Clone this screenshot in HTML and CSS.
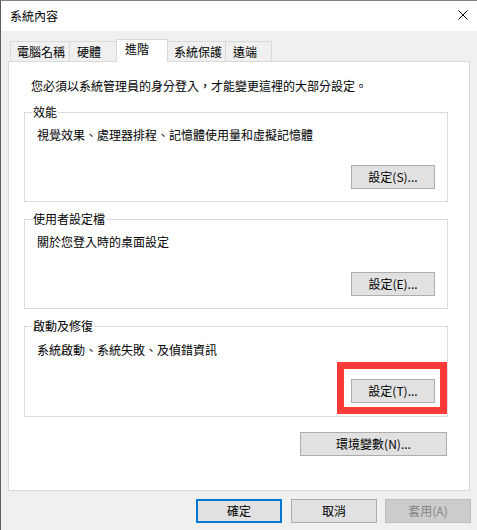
FILE: index.html
```html
<!DOCTYPE html>
<html lang="zh-Hant">
<head>
  <meta charset="UTF-8" />
  <title>系統內容</title>
  <link rel="stylesheet" href="styles.css">
</head>
<body>
  <div class="window">
    <div class="titlebar">
      <span class="title">系統內容</span>
      <svg class="close" width="10" height="10" viewBox="0 0 10 10">
        <path d="M0.5 0.5L9.5 9.5M9.5 0.5L0.5 9.5" stroke="#000" stroke-width="1" fill="none"/>
      </svg>
    </div>

    <div class="body">
      <div class="tabs">
        <div class="tab tab-name">電腦名稱</div>
        <div class="tab tab-hw">硬體</div>
        <div class="tab tab-adv active">進階</div>
        <div class="tab tab-prot">系統保護</div>
        <div class="tab tab-remote">遠端</div>
      </div>

      <div class="panel">
        <p class="note">您必須以系統管理員的身分登入，才能變更這裡的大部分設定。</p>

        <div class="group">
          <div class="group-title">效能</div>
          <div class="group-text">視覺效果、處理器排程、記憶體使用量和虛擬記憶體</div>
          <div class="group-actions">
            <button class="btn">設定(S)...</button>
          </div>
        </div>

        <div class="group">
          <div class="group-title">使用者設定檔</div>
          <div class="group-text">關於您登入時的桌面設定</div>
          <div class="group-actions">
            <button class="btn">設定(E)...</button>
          </div>
        </div>

        <div class="group group-last">
          <div class="group-title">啟動及修復</div>
          <div class="group-text">系統啟動、系統失敗、及偵錯資訊</div>
          <div class="group-actions">
            <button class="btn">設定(T)...</button>
          </div>
          <div class="highlight"></div>
        </div>

        <div class="env-row">
          <button class="btn btn-wide">環境變數(N)...</button>
        </div>
      </div>

      <div class="footer">
        <button class="btn btn-footer btn-default">確定</button>
        <button class="btn btn-footer">取消</button>
        <button class="btn btn-footer" disabled>套用(A)</button>
      </div>
    </div>
  </div>
</body>
</html>
```

FILE: styles.css
```css
* { box-sizing: border-box; }

body {
  margin: 0;
  font-family: "Noto Sans CJK TC", "Noto Sans", sans-serif;
  font-size: 12px;
  line-height: 16px;
  color: #000;
  background: #f0f0f0;
}

.window {
  height: 530px;
  display: flex;
  flex-direction: column;
  border-top: 1px solid #848484;
  border-left: 1px solid #5c5c5c;
  background: #f0f0f0;
}

.titlebar {
  height: 30px;
  flex: none;
  background: #fff;
  display: flex;
  align-items: center;
  justify-content: space-between;
  padding: 0 9px 0 9px;
}

.close { display: block; margin-top: -2px; }

.body {
  flex: 1;
  padding: 8px 7px 0 7px;
}

/* tabs */
.tabs {
  display: flex;
  align-items: flex-end;
  height: 22px;
  padding-left: 2px;
}

.tab {
  height: 20px;
  padding: 2px 0 0 6px;
  border: 1px solid #d9d9d9;
  border-bottom: none;
  background: #f0f0f0;
  white-space: nowrap;
}

.tab + .tab { margin-left: -1px; }

.tab-name { width: 60px; }
.tab-hw { width: 48px; padding-left: 7px; }
.tab-adv { width: 52px; padding-left: 8px; }
.tab-prot { width: 59px; }
.tab-remote { width: 47px; padding-left: 7px; }

.tab.active {
  height: 23px;
  margin-bottom: -1px;
  padding-top: 1px;
  background: #fff;
  position: relative;
  z-index: 1;
}

/* main panel */
.panel {
  width: 462px;
  height: 430px;
  background: #fff;
  border: 1px solid #d9d9d9;
  padding: 16px 0 0 15px;
}

.note {
  margin: 0 0 18px 7px;
  white-space: nowrap;
}

.group {
  width: 424px;
  height: 90px;
  border: 1px solid #dcdcdc;
  display: flex;
  flex-direction: column;
  margin-bottom: 17px;
}

.group-last {
  height: 91px;
  margin-bottom: 15px;
  position: relative;
}

.group-title {
  width: fit-content;
  margin: -9px 0 0 7px;
  padding: 0 1px;
  background: #fff;
}

.group-text {
  margin: 7px 0 0 12px;
}

.group-last .group-text { margin-top: 8px; }

.group-actions {
  margin-top: auto;
  display: flex;
  justify-content: flex-end;
  padding: 0 12px 12px 0;
}

.group-last .group-actions { padding-bottom: 13px; }

.highlight {
  position: absolute;
  left: 312px;
  top: 35px;
  width: 110px;
  height: 52px;
  border: 7px solid #fc3a3a;
}

.env-row {
  width: 423px;
  display: flex;
  justify-content: flex-end;
}

/* buttons */
.btn {
  width: 84px;
  height: 24px;
  padding: 0;
  font: inherit;
  color: #000;
  background: #e1e1e1;
  border: 1px solid #adadad;
  text-align: center;
  white-space: nowrap;
}

.btn-wide { width: 147px; }

.footer {
  display: flex;
  justify-content: flex-end;
  gap: 8px;
  margin: 8px -1px 0 0;
}

.btn-footer { width: 86px; }
.btn-default { border: 2px solid #0078d7; margin-right: 1px; }

.btn:disabled {
  background: #cccccc;
  border-color: #bfbfbf;
  color: #838383;
}
```
